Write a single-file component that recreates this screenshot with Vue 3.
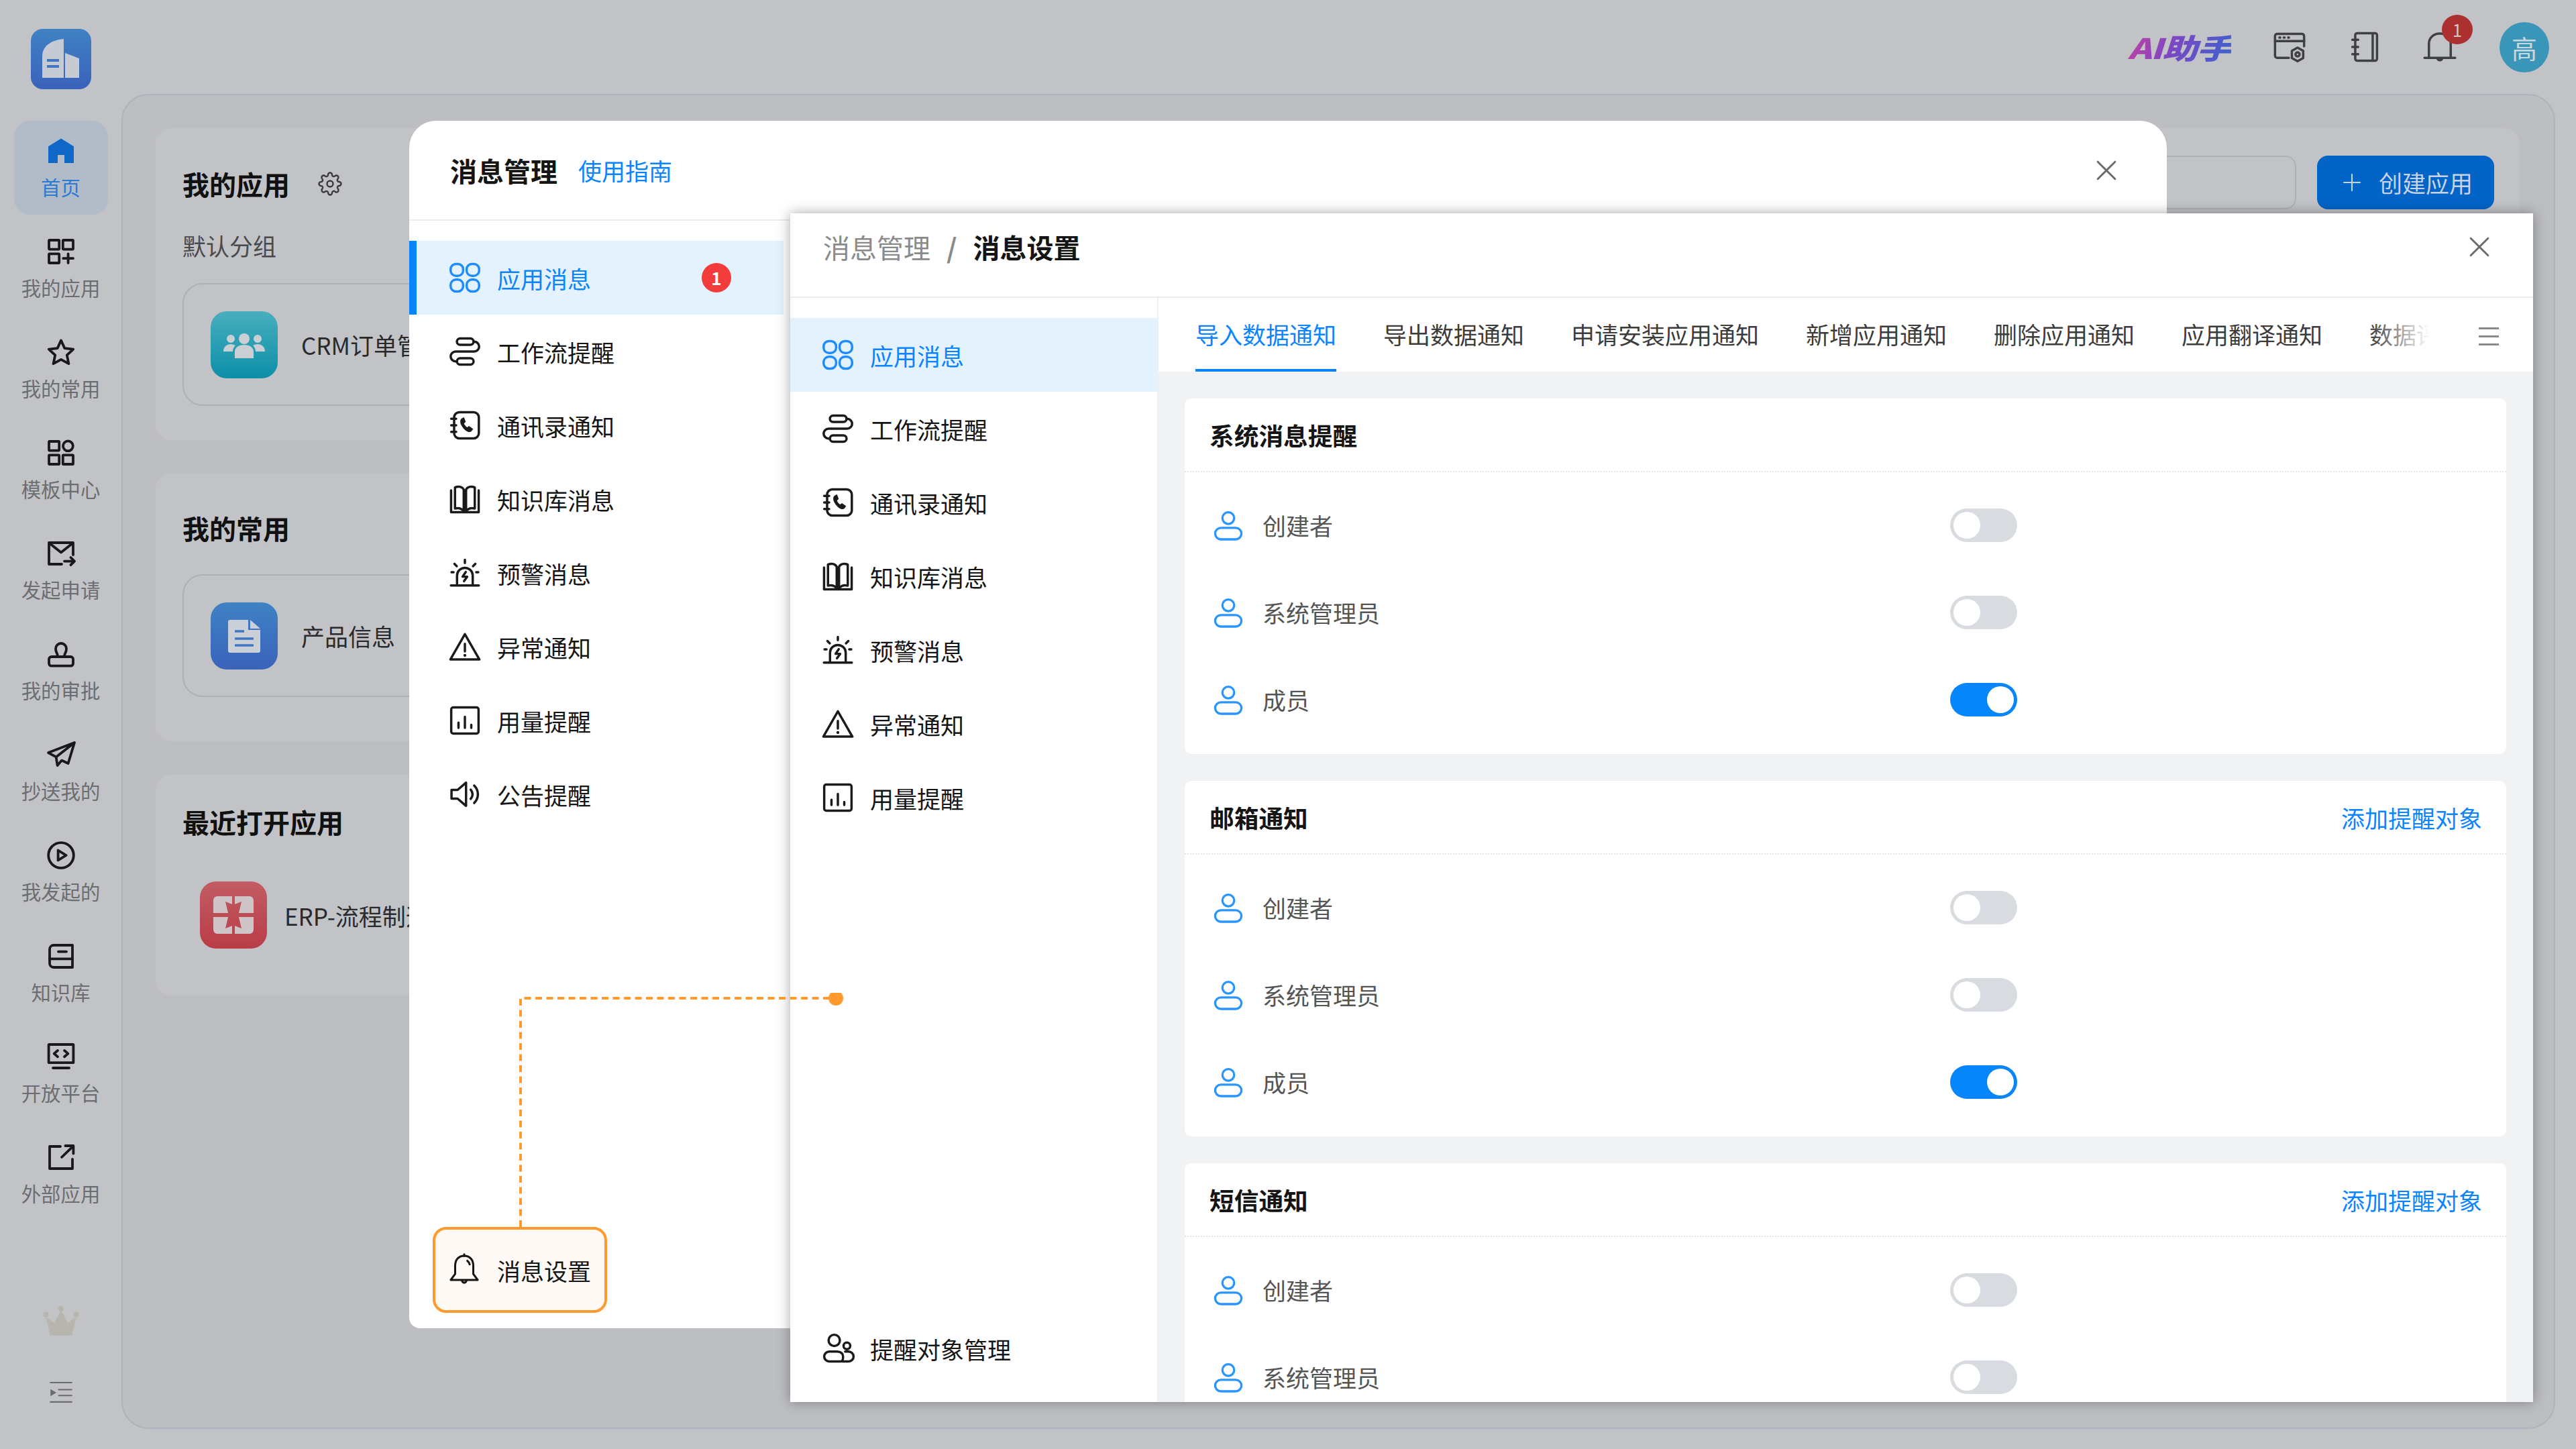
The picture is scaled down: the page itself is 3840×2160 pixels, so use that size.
<script setup>
import { h } from 'vue'

const rr = (x, y, w, t, r) =>
  `M${x + r} ${y}h${w - 2 * r}a${r} ${r} 0 0 1 ${r} ${r}v${t - 2 * r}a${r} ${r} 0 0 1 -${r} ${r}h-${w - 2 * r}a${r} ${r} 0 0 1 -${r} -${r}v-${t - 2 * r}a${r} ${r} 0 0 1 ${r} -${r}z`
const dot = (x, y, r) => `M${x - r} ${y}a${r} ${r} 0 1 0 ${2 * r} 0a${r} ${r} 0 1 0 -${2 * r} 0z`

const icons = {
  apps: { s: [rr(2.2, 2.5, 8.6, 8.2, 3.6), rr(13.2, 2.5, 8.6, 8.2, 3.6), rr(2.2, 13.3, 8.6, 8.2, 3.6), rr(13.2, 13.3, 8.6, 8.2, 3.6)] },
  flow: { s: [rr(6.5, 3, 11.5, 4.4, 2.2), rr(6.5, 16.6, 11.5, 4.4, 2.2), 'M18 5.2h.4a3.4 3.4 0 0 1 0 6.8H5.6a3.4 3.4 0 0 0 0 6.8h.9'] },
  phone: {
    s: [rr(4.6, 3, 17, 18, 3.6), 'M2.6 7.5h3.4M2.6 12h3.4M2.6 16.5h3.4'],
    f: ['M10.2 7c-1.8.9-1.9 3.2 0 6 1.9 2.8 4.3 4.3 6.2 3.3l1.3-1.8-2.9-2-1.2.9c-1-.6-1.8-1.6-2.2-2.7l1.2-1.1-1.2-3.1z'],
  },
  book: { s: ['M2.5 6v15h19V6', 'M5.2 18.5V4c2-1 5-.8 6 1.5v15c-1.3-2-3.8-2.5-6-2z', 'M12.8 5.5c1-2.3 4-2.5 6-1.5v14.5c-2.2-.5-4.7 0-6 2z'] },
  alarm: { s: ['M6.6 20.5v-6.6a5.4 5.4 0 0 1 10.8 0v6.6', 'M2.4 20.7h19.2', 'M12 3v2.2M4.8 5.8l1.6 1.6M19.2 5.8l-1.6 1.6M2.8 11.5h1.4M19.8 11.5h1.4', 'M12.6 11.4l-2.2 3.2h3.2l-2.2 3.1'] },
  warn: { s: ['M12 3.4 22 20.8H2z', 'M12 10v5.2'], f: [dot(12, 18, 1)] },
  usage: { s: [rr(2.6, 3, 18.8, 18, 1.4), 'M7.6 13.5v3.6M12 9.5v7.6M16.4 15v2.1'] },
  speaker: { s: ['M2.8 9h4.2l5.8-5v16l-5.8-5H2.8z', 'M16 8.8c1.6 2 1.6 4.4 0 6.4', 'M18.4 6c3.4 3.4 3.4 8.6 0 12'] },
  bell: { s: ['M12 3c-3.8 0-5.8 2.8-5.8 6.4v5.2L3.4 18.4h17.2l-2.8-3.8V9.4C17.8 5.8 15.8 3 12 3z', 'M10.6 18.8a1.4 1.4 0 0 0 2.8 0', 'M12 2v1', 'M14 6.2c.8.6 1.3 1.4 1.5 2.3'] },
  user: { s: [dot(12, 6.4, 4.2), rr(2.6, 13.4, 18.8, 8.2, 4.1)] },
  persons: { s: [dot(9.5, 6.5, 3.9), dot(18.2, 10.3, 2.3), 'M13.8 21H6a3.2 3.2 0 0 1 0-6.8h5.6c2.4 0 4 1.5 4 3.4 0 1.8-.6 3.4-1.8 3.4zM17 14.2h2.4a2.9 2.9 0 0 1 0 6.8H15.2'] },
  home: { f: ['M12 2.8 2.5 8.6V21h7v-6h5v6h7V8.6z'] },
  myapps: { s: [rr(3, 3.5, 7.6, 6.8, 0.4), rr(13.4, 3.5, 7.6, 6.8, 0.4), rr(3, 13.7, 7.6, 6.8, 0.4), 'M13.6 17.1h7.4M17.3 13.7v6.8'] },
  star: { s: ['M12 3.2l2.7 5.9 6.4.7-4.7 4.4 1.3 6.4-5.7-3.2-5.7 3.2 1.3-6.4L2.9 9.8l6.4-.7z'] },
  grid: { s: [rr(3, 3.5, 7.6, 6.8, 0.4), dot(17.2, 6.9, 3.7), rr(3, 13.7, 7.6, 6.8, 0.4), rr(13.4, 13.7, 7.6, 6.8, 0.4)] },
  mailsend: { s: ['M12.5 20H3V4h18v9', 'M3.5 4.5l8.5 6.8 8.5-6.8', 'M14.5 17.8h7.5M19.2 15l2.8 2.8-2.8 2.8'] },
  stamp: { s: ['M9.5 13.5c0-2-1.5-2.5-1.5-5.5a4 4 0 0 1 8 0c0 3-1.5 3.5-1.5 5.5', rr(3, 14, 18, 6.8, 1.8)] },
  plane: { s: ['M22 3 2.5 10.5l5.8 3.2L22 3zM8.3 13.7l1 6.3 3.2-3.7 4.8 2.2L22 3'] },
  play: { s: [dot(12, 12, 9.4), 'M9.8 8.3v7.4l6-3.7z'] },
  kb: { s: ['M3.5 7a3 3 0 0 1 3-3H20.5v16.5H6.5a3 3 0 0 1-3-3z', 'M3.5 14.2H20.5M10 8.8h6'] },
  code: { s: [rr(2.8, 3, 18.4, 13.6, 0.4), 'M9.5 7.5 6.8 9.8l2.7 2.3M14.5 7.5l2.7 2.3-2.7 2.3', 'M6 20.5h12'] },
  ext: { s: ['M11.5 4H3.5v16.5h17V13.5', 'M12.5 12 21 3.8M15.2 3.5h6v5.8'] },
  gear: {
    s: [dot(12, 12, 3), 'M19.4 15a1.65 1.65 0 0 0 .33 1.82l.06.06a2 2 0 0 1 0 2.83 2 2 0 0 1-2.83 0l-.06-.06a1.65 1.65 0 0 0-1.82-.33 1.65 1.65 0 0 0-1 1.51V21a2 2 0 0 1-2 2 2 2 0 0 1-2-2v-.09A1.65 1.65 0 0 0 9 19.4a1.65 1.65 0 0 0-1.82.33l-.06.06a2 2 0 0 1-2.83 0 2 2 0 0 1 0-2.83l.06-.06a1.65 1.65 0 0 0 .33-1.82 1.65 1.65 0 0 0-1.51-1H3a2 2 0 0 1-2-2 2 2 0 0 1 2-2h.09A1.65 1.65 0 0 0 4.6 9a1.65 1.65 0 0 0-.33-1.82l-.06-.06a2 2 0 0 1 0-2.83 2 2 0 0 1 2.83 0l.06.06a1.65 1.65 0 0 0 1.82.33H9a1.65 1.65 0 0 0 1-1.51V3a2 2 0 0 1 2-2 2 2 0 0 1 2 2v.09a1.65 1.65 0 0 0 1 1.51 1.65 1.65 0 0 0 1.82-.33l.06-.06a2 2 0 0 1 2.83 0 2 2 0 0 1 0 2.83l-.06.06a1.65 1.65 0 0 0-.33 1.82V9a1.65 1.65 0 0 0 1.51 1H21a2 2 0 0 1 2 2 2 2 0 0 1-2 2h-.09a1.65 1.65 0 0 0-1.51 1z'],
  },
  wingear: {
    s: ['M11.5 19.5H3.5A1.5 1.5 0 0 1 2 18V4.5A1.5 1.5 0 0 1 3.5 3h17A1.5 1.5 0 0 1 22 4.5v7', 'M2 8h20', 'M5 5.5h.6M8 5.5h.6M11 5.5h.6', 'M17.5 12.5l3.9 2.2v4.9l-3.9 2.2-3.9-2.2v-4.9z', dot(17.5, 17.1, 1.4)],
  },
  notebook: { s: [rr(5.5, 2.5, 15, 19, 1.4), 'M17.5 2.7v18.6', 'M3.5 7h4M3.5 12h4M3.5 17h4'] },
  bellthin: { s: ['M4.5 18.8V9.8C4.5 5.8 7.5 2.8 12 2.8s7.5 3 7.5 7v9', 'M1.5 19.5h21', 'M10.4 20a1.7 1.7 0 0 0 3.2 0'] },
  close: { s: ['M5 5l14 14M19 5 5 19'] },
  plus: { s: ['M12 3v18M3 12h18'] },
  indent: { s: ['M3 4h18M10 10h11M10 15h11M3 20.5h18'], f: ['M3 9.5v6l5-3z'] },
  crown: { f: ['M5.5 19.5 3 8.5 8 12l4-7.5L16 12l5-3.5-2.5 11z', dot(3, 7, 1.6), dot(21, 7, 1.6), dot(12, 3.5, 1.6)] },
}

const Ic = (props) => {
  const def = icons[props.name]
  return h(
    'svg',
    {
      viewBox: '0 0 24 24',
      fill: 'none',
      stroke: 'currentColor',
      'stroke-width': props.sw || 1.6,
      'stroke-linecap': 'round',
      'stroke-linejoin': 'round',
    },
    [
      ...(def.s || []).map((d) => h('path', { d })),
      ...(def.f || []).map((d) => h('path', { d, fill: 'currentColor', stroke: 'none', 'fill-rule': 'evenodd' })),
    ]
  )
}
Ic.props = ['name', 'sw']

const sideItems = [
  { label: '首页', icon: 'home', active: true },
  { label: '我的应用', icon: 'myapps' },
  { label: '我的常用', icon: 'star' },
  { label: '模板中心', icon: 'grid' },
  { label: '发起申请', icon: 'mailsend' },
  { label: '我的审批', icon: 'stamp' },
  { label: '抄送我的', icon: 'plane' },
  { label: '我发起的', icon: 'play' },
  { label: '知识库', icon: 'kb' },
  { label: '开放平台', icon: 'code' },
  { label: '外部应用', icon: 'ext' },
]

const modalMenu = [
  { label: '应用消息', icon: 'apps', active: true, badge: 1 },
  { label: '工作流提醒', icon: 'flow' },
  { label: '通讯录通知', icon: 'phone' },
  { label: '知识库消息', icon: 'book' },
  { label: '预警消息', icon: 'alarm' },
  { label: '异常通知', icon: 'warn' },
  { label: '用量提醒', icon: 'usage' },
  { label: '公告提醒', icon: 'speaker' },
]

const drawerMenu = modalMenu.slice(0, 7)

const tabs = ['导入数据通知', '导出数据通知', '申请安装应用通知', '新增应用通知', '删除应用通知', '应用翻译通知', '数据评论通知']

const sections = [
  { title: '系统消息提醒', link: false, rows: [['创建者', false], ['系统管理员', false], ['成员', true]] },
  { title: '邮箱通知', link: true, rows: [['创建者', false], ['系统管理员', false], ['成员', true]] },
  { title: '短信通知', link: true, rows: [['创建者', false], ['系统管理员', false]] },
]
</script>

<template>
  <div class="page">
    <header class="topbar">
      <div class="logo">
        <svg viewBox="0 0 90 90" width="90" height="90">
          <path d="M17 73V41c0-14 11-24 32-26v58z" fill="#c6cbd3" />
          <path d="M51 36l21 8v29H51z" fill="#c6cbd3" />
          <path d="M24 47h18M24 56h18" stroke="#3f77c3" stroke-width="4" />
        </svg>
      </div>
      <div class="top-right">
        <span class="ai">AI助手</span>
        <Ic name="wingear" class="top-ic" />
        <Ic name="notebook" class="top-ic" />
        <div class="bell-wrap">
          <Ic name="bellthin" class="top-ic" />
          <span class="bell-badge">1</span>
        </div>
        <div class="avatar">高</div>
      </div>
    </header>

    <div class="body">
      <aside class="side">
        <div v-for="s in sideItems" :key="s.label" class="side-item" :class="{ on: s.active }">
          <Ic :name="s.icon" class="side-ic" :sw="1.9" />
          <span>{{ s.label }}</span>
        </div>
        <div class="side-foot">
          <Ic name="crown" class="crown" />
          <Ic name="indent" class="indent" :sw="1.2" />
        </div>
      </aside>

      <main class="main">
        <section class="card c1">
          <div class="head">
            <h2>我的应用</h2>
            <Ic name="gear" class="gear" />
            <div class="head-right">
              <div class="search"></div>
              <div class="create"><Ic name="plus" class="plus" /><span>创建应用</span></div>
            </div>
          </div>
          <div class="sub">默认分组</div>
          <div class="appbox">
            <div class="tile teal">
              <svg viewBox="0 0 100 100" width="100" height="100">
                <g fill="#c9cfd3">
                  <circle cx="50" cy="41" r="8" /><circle cx="30" cy="41" r="6" /><circle cx="70" cy="41" r="6" />
                  <path d="M19 60c0-7 5-11 11-11 3 0 5 1 7 2-3 3-4 6-4 9zM81 60c0-7-5-11-11-11-3 0-5 1-7 2 3 3 4 6 4 9zM36 70V60c0-6 6-10 14-10s14 4 14 10v10z" />
                </g>
              </svg>
            </div>
            <span>CRM订单管理</span>
          </div>
        </section>

        <section class="card c2">
          <div class="head"><h2>我的常用</h2></div>
          <div class="appbox">
            <div class="tile blue">
              <svg viewBox="0 0 100 100" width="100" height="100">
                <path d="M26 29a3 3 0 0 1 3-3h27v15h18v31a3 3 0 0 1-3 3H29a3 3 0 0 1-3-3zM59 26l15 13H59z" fill="#cbd0d8" />
                <path d="M36 43h14M36 54h28M36 64h28" stroke="#3f77c3" stroke-width="3.5" />
              </svg>
            </div>
            <span>产品信息</span>
          </div>
        </section>

        <section class="card c3">
          <div class="head"><h2>最近打开应用</h2></div>
          <div class="recent">
            <div class="tile red">
              <svg viewBox="0 0 100 100" width="100" height="100">
                <path d="M20 28a6 6 0 0 1 6-6h22v12l-10-4 4 17H20zM52 22h22a6 6 0 0 1 6 6v19H58l4-17-10 4zM20 53h22l-4 17 10-4v12H26a6 6 0 0 1-6-6zM80 53v19a6 6 0 0 1-6 6H52V66l10 4-4-17z" fill="#cfc5c9" />
              </svg>
            </div>
            <span>ERP-流程制造</span>
          </div>
        </section>
      </main>
    </div>

    <div class="modal">
      <div class="modal-head">
        <strong>消息管理</strong>
        <a>使用指南</a>
        <Ic name="close" class="close" />
      </div>
      <nav class="modal-menu">
        <div v-for="m in modalMenu" :key="m.label" class="mm-row" :class="{ on: m.active }">
          <Ic :name="m.icon" class="mm-ic" />
          <span>{{ m.label }}</span>
          <i v-if="m.badge" class="mm-badge">{{ m.badge }}</i>
        </div>
      </nav>
      <div class="msg-set">
        <Ic name="bell" class="ms-ic" :sw="1.3" />
        <span>消息设置</span>
      </div>
    </div>

    <div class="drawer">
      <div class="dr-head">
        <span class="crumb">消息管理</span>
        <span class="slash">/</span>
        <strong>消息设置</strong>
        <Ic name="close" class="close" />
      </div>
      <div class="dr-body">
        <nav class="dr-menu">
          <div v-for="m in drawerMenu" :key="m.label" class="dm-row" :class="{ on: m.active }">
            <Ic :name="m.icon" class="mm-ic" />
            <span>{{ m.label }}</span>
          </div>
          <div class="dm-row dm-last">
            <Ic name="persons" class="mm-ic" />
            <span>提醒对象管理</span>
          </div>
        </nav>
        <div class="dr-main">
          <div class="tabs">
            <div class="tab-list">
              <span v-for="(t, i) in tabs" :key="t" class="tab" :class="{ on: i === 0 }">{{ t }}</span>
              <div class="tab-fade"></div>
            </div>
            <div class="burger"><i></i><i></i><i></i></div>
          </div>
          <div class="content">
            <section v-for="s in sections" :key="s.title" class="sec">
              <div class="sec-head">
                <strong>{{ s.title }}</strong>
                <a v-if="s.link">添加提醒对象</a>
              </div>
              <div class="sec-rows">
                <div v-for="r in s.rows" :key="r[0]" class="row">
                  <div class="row-left">
                    <Ic name="user" class="user-ic" />
                    <span>{{ r[0] }}</span>
                  </div>
                  <div class="switch" :class="{ on: r[1] }"><b></b></div>
                </div>
              </div>
            </section>
          </div>
        </div>
      </div>
    </div>

    <svg class="guide" width="500" height="360" viewBox="0 0 500 360">
      <path d="M6 349V8H476" fill="none" stroke="#ff9a2e" stroke-width="4" stroke-dasharray="10 6.5" />
      <circle cx="476" cy="8" r="11" fill="#ff9a2e" />
    </svg>
  </div>
</template>

<style>
html, body { margin: 0; background: #c2c3c7; }
</style>

<style scoped>
.page {
  position: relative;
  width: 3840px;
  height: 2160px;
  overflow: hidden;
  display: flex;
  flex-direction: column;
  background: #c2c3c7;
  font-family: "Noto Sans CJK SC", "Noto Sans", sans-serif;
  font-size: 35px;
  color: #151515;
}
h2 { margin: 0; font-size: 40px; font-weight: 700; line-height: 50px; color: #111; }

.topbar { height: 140px; flex: none; display: flex; align-items: center; padding: 0 40px 0 46px; }
.logo { width: 90px; height: 90px; border-radius: 18px; background: linear-gradient(180deg, #3f82c4, #3a62bb); margin-top: 36px; }
.top-right { margin-left: auto; display: flex; align-items: center; gap: 60px; }
.ai {
  display: inline-block; font-size: 42px; font-weight: 900; font-style: italic; line-height: 50px; letter-spacing: -1px;
  transform: scaleX(1.26); transform-origin: right center; margin-right: 1px;
  background: linear-gradient(110deg, #c8409f 0%, #7a48c4 45%, #3a62cf 100%);
  -webkit-background-clip: text; background-clip: text; color: transparent;
}
.top-ic { width: 52px; height: 52px; color: #3f4042; display: block; }
.bell-wrap { position: relative; }
.bell-badge {
  position: absolute; left: 29px; top: -22px; width: 46px; height: 44px; border-radius: 50%;
  background: #ad3031; color: #d5c5c5; font-size: 26px; line-height: 44px; text-align: center;
}
.avatar {
  width: 74px; height: 75px; border-radius: 50%; background: #3a96b8; color: #c8d8de; margin-left: 3px;
  font-size: 38px; line-height: 75px; text-align: center;
}

.body { flex: 1; display: flex; min-height: 0; padding: 0 31px 30px 0; }
.side { width: 181px; flex: none; padding-top: 40px; display: flex; flex-direction: column; align-items: center; gap: 10px; position: relative; }
.side-item {
  width: 140px; height: 140px; flex: none; border-radius: 24px; display: flex; flex-direction: column; align-items: center;
  padding-top: 21px; box-sizing: border-box; font-size: 29.4px; line-height: 40px; color: #6c6d70;
}
.side-item.on { background: #b2bcc8; color: #2b7ad6; }
.side-ic { width: 48px; height: 48px; color: #19191b; margin-bottom: 9px; }
.side-item.on .side-ic { color: #0f68c7; }
.side-foot { margin-top: auto; display: flex; flex-direction: column; align-items: center; gap: 52px; padding-bottom: 34px; }
.crown { width: 68px; height: 60px; color: #b8b5ae; display: block; }
.indent { width: 42px; height: 42px; color: #6a6b6e; display: block; }

.main {
  flex: 1; min-width: 0; box-sizing: border-box; border: 2px solid #aeb2bc; border-radius: 40px; background: #bdbec2;
  padding: 49px 51px 0 49px; display: flex; flex-direction: column; gap: 49px;
}
.card { background: #c2c3c7; border-radius: 24px; padding: 0 40px; box-sizing: border-box; }
.c1 { padding-top: 58px; padding-bottom: 51px; }
.c2 { padding-top: 57px; padding-bottom: 66px; }
.c3 { padding-top: 45px; padding-bottom: 70px; margin-top: 1px; }
.head { display: flex; align-items: center; height: 50px; }
.gear { width: 36px; height: 36px; margin-left: 42px; color: #3a3b3d; }
.head-right { margin-left: auto; margin-top: -4px; margin-right: -2px; display: flex; gap: 31px; }
.search { width: 320px; height: 80px; box-sizing: border-box; border: 2px solid #adb0b8; border-radius: 16px; }
.create {
  width: 264px; height: 80px; border-radius: 16px; background: #0264c6; color: #c7d3e0; display: flex; align-items: center;
  justify-content: center; gap: 24px; line-height: 80px; padding-left: 4px; box-sizing: border-box;
}
.plus { width: 32px; height: 32px; }
.sub { margin-top: 42px; line-height: 50px; color: #4a4a4c; }
.appbox {
  margin-top: 31px; width: 760px; height: 183px; box-sizing: border-box; border: 2px solid #adb0b8; border-radius: 30px;
  display: flex; align-items: center; padding-left: 40px; gap: 35px; color: #2a2a2c;
}
.c2 .appbox { margin-top: 44px; }
.tile { width: 100px; height: 100px; border-radius: 24px; flex: none; }
.teal { background: linear-gradient(180deg, #48aebd, #0c8fa8); }
.blue { background: linear-gradient(180deg, #3f82c4, #3a62bb); }
.red { background: linear-gradient(180deg, #c25c64, #b93c46); }
.recent { margin-top: 64px; padding-left: 26px; display: flex; align-items: center; gap: 26px; color: #2a2a2c; }

.modal {
  position: absolute; left: 610px; top: 180px; width: 2620px; height: 1800px; background: #fff;
  border-radius: 40px 40px 0 16px; display: flex; flex-direction: column;
}
.modal-head {
  height: 149px; flex: none; box-sizing: border-box; border-bottom: 2px solid #ececec; display: flex; align-items: center;
  padding: 0 68px 0 61px; position: relative;
}
.modal-head strong { font-size: 40px; font-weight: 700; }
.modal-head a { margin-left: 31px; color: #0a84ff; }
.close { width: 44px; height: 44px; color: #6b6b6b; margin-left: auto; flex: none; }
.modal-menu { width: 558px; padding-top: 30px; }
.mm-row {
  height: 110px; display: flex; align-items: center; box-sizing: border-box; border-left: 11px solid transparent; padding: 0 78px 0 46px;
}
.mm-row.on { border-left-color: #0785fb; background: #e3f2fd; color: #0a84ff; }
.mm-ic { width: 52px; height: 52px; margin-right: 22px; flex: none; color: #1a1a1a; }
.on .mm-ic { color: #1e8cfb; }
.mm-badge {
  margin-left: auto; width: 44px; height: 44px; border-radius: 50%; background: #f23c3c; color: #fff; font-style: normal;
  font-weight: 700; font-size: 26px; line-height: 44px; text-align: center;
}
.msg-set {
  margin: auto 0 23px 35px; width: 260px; height: 128px; box-sizing: border-box; border: 4px solid #ff9a2e; border-radius: 20px;
  background: #fef9f4; display: flex; align-items: center; padding-left: 15px;
}
.ms-ic { width: 56px; height: 56px; margin-right: 21px; flex: none; }

.drawer {
  position: absolute; left: 1178px; top: 318px; width: 2598px; height: 1772px; background: #fff;
  box-shadow: 0 0 18px rgba(0, 0, 0, .35); display: flex; flex-direction: column;
}
.dr-head {
  height: 126px; flex: none; box-sizing: border-box; border-bottom: 2px solid #ececec; display: flex; align-items: center;
  padding: 0 58px 24px 49px; font-size: 40px;
}
.crumb { color: #8a8a8a; }
.slash { color: #8a8a8a; font-weight: 700; margin: 0 24px; }
.dr-head strong { font-weight: 700; }
.dr-body { flex: 1; min-height: 0; display: flex; }
.dr-menu {
  width: 549px; flex: none; box-sizing: border-box; border-right: 2px solid #efefef; padding: 30px 0 25px; display: flex; flex-direction: column;
}
.dm-row { height: 110px; flex: none; display: flex; align-items: center; padding-left: 45px; }
.dm-row.on { background: #e3f2fd; color: #0a84ff; }
.dm-last { margin-top: auto; }
.dr-main { flex: 1; min-width: 0; display: flex; flex-direction: column; }
.tabs { height: 110px; flex: none; display: flex; position: relative; }
.tab-list { position: relative; width: 1840px; margin-left: 55px; display: flex; gap: 70px; overflow: hidden; white-space: nowrap; color: #3c3c3c; }
.tab { height: 110px; line-height: 107px; box-sizing: border-box; flex: none; }
.tab.on { color: #0a84ff; border-bottom: 4px solid #0a84ff; }
.tab-fade { position: absolute; right: 0; top: 0; bottom: 0; width: 90px; background: linear-gradient(90deg, rgba(255, 255, 255, 0), #fff); }
.burger { margin-left: 73px; margin-top: 44px; width: 30px; display: flex; flex-direction: column; gap: 9px; }
.burger i { display: block; height: 3px; background: #8a8a8a; }
.content { flex: 1; min-height: 0; overflow: hidden; background: #f1f2f4; padding: 40px 40px 0 39px; display: flex; flex-direction: column; gap: 40px; }
.sec { flex: none; background: #fff; border-radius: 10px; }
.sec-head {
  height: 110px; box-sizing: border-box; border-bottom: 2px dotted #e2e2e2; display: flex; align-items: center; justify-content: space-between;
  padding: 0 36px 0 37px;
}
.sec-head strong { font-weight: 700; font-size: 36.7px; }
.sec-head a { color: #0a84ff; }
.sec-rows { padding: 15px 0; }
.row { height: 130px; display: flex; align-items: center; color: #555; }
.row-left { width: 1141px; box-sizing: border-box; padding-left: 40px; display: flex; align-items: center; gap: 26px; }
.row-left span { margin-top: -3px; }
.user-ic { width: 50px; height: 50px; color: #2a94ff; flex: none; }
.switch { width: 100px; height: 50px; border-radius: 25px; background: #d8dbe0; margin-top: -2px; padding: 5px; box-sizing: border-box; }
.switch b { display: block; width: 40px; height: 40px; border-radius: 50%; background: #fff; }
.switch.on { background: #0785fb; }
.switch.on b { margin-left: 50px; }

.guide { position: absolute; left: 770px; top: 1480px; }
</style>
